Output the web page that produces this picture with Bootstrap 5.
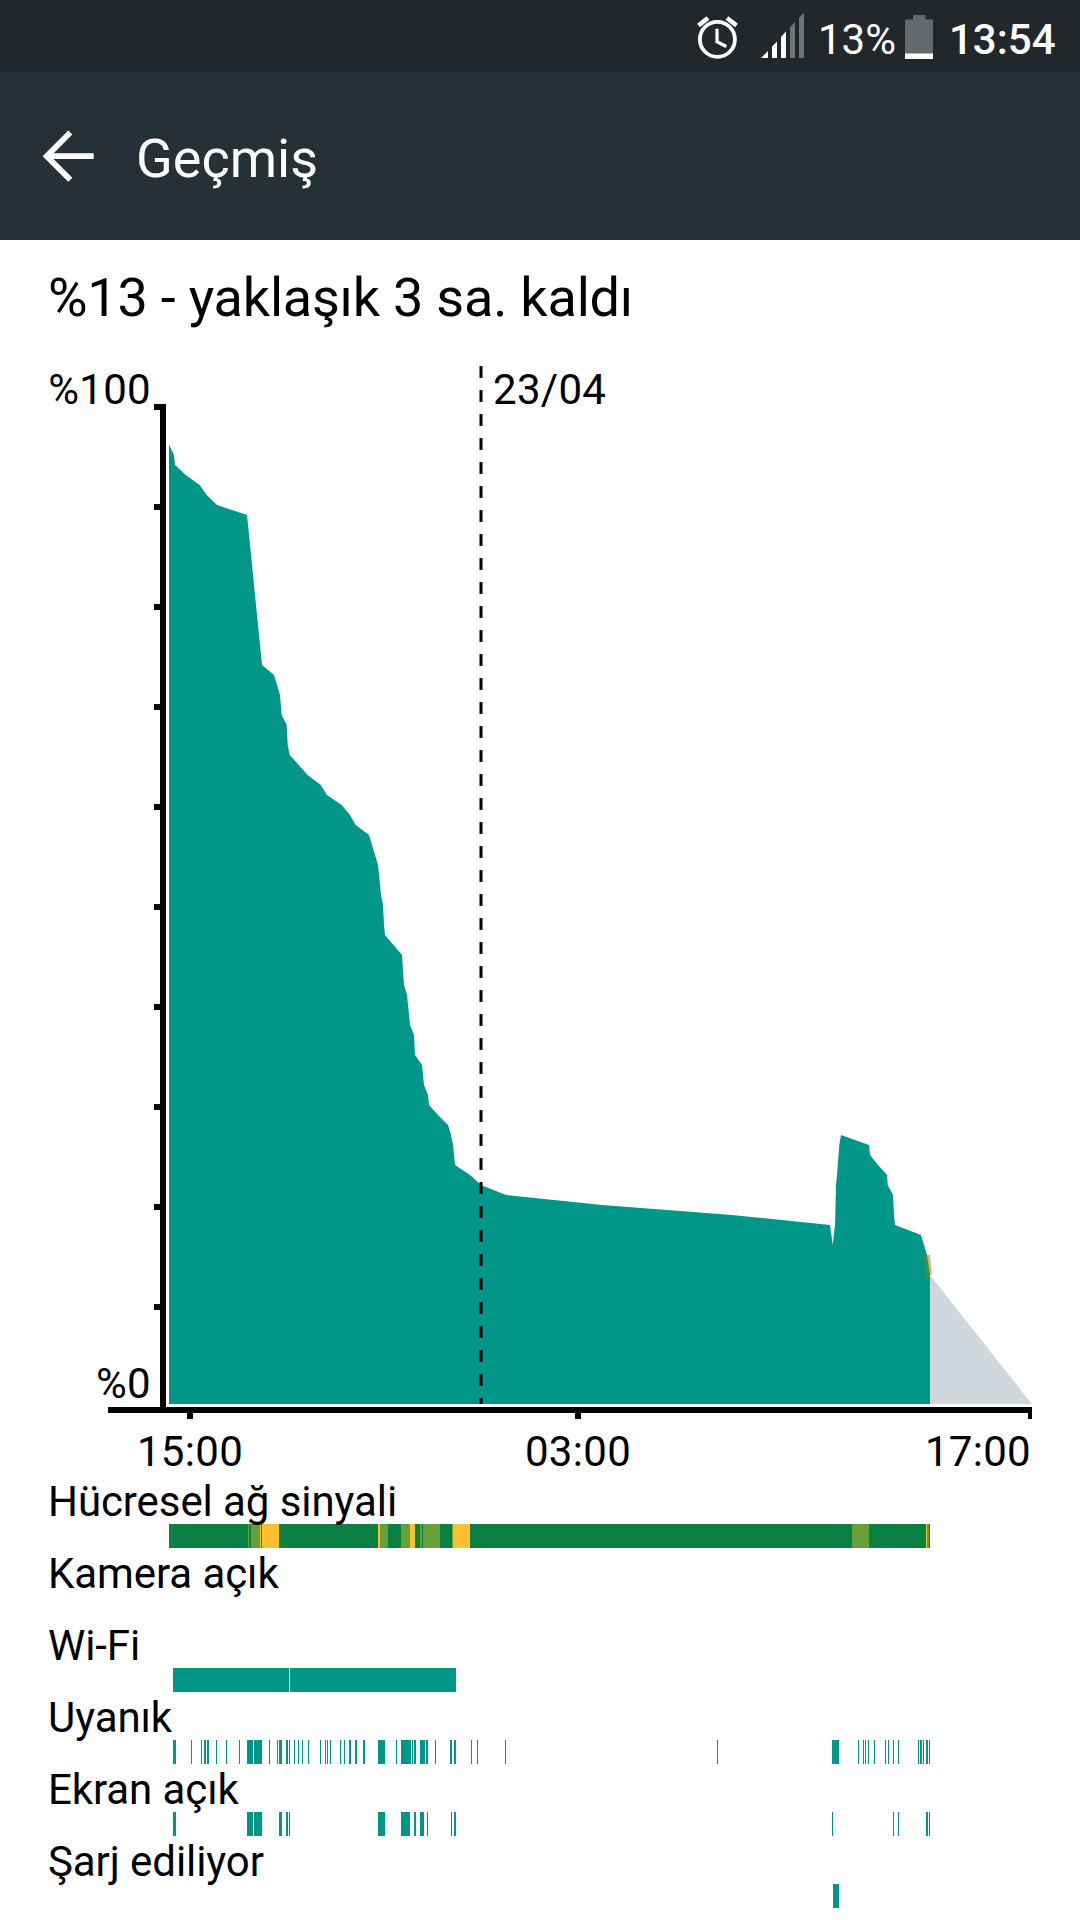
<!DOCTYPE html>
<html lang="tr">
<head>
<meta charset="utf-8">
<meta name="viewport" content="width=device-width, initial-scale=1">
<title>Geçmiş</title>
<link href="https://cdn.jsdelivr.net/npm/bootstrap@5.3.0/dist/css/bootstrap.min.css" rel="stylesheet">
<style>
  body { font-family: Roboto, "Noto Sans", sans-serif; color: #000; background: #fff; font-size: 42px; }
  svg { display: block; flex: none; }
  .screen { width: 1080px; height: 1920px; overflow: hidden; }
  .status-bar { height: 72px; background: #22272b; padding-right: 24px; line-height: 72px; }
  .status-bar svg:first-child { margin-right: -2px; }
  .status-bar .level { width: 81px; padding-top: 4px; }
  .status-bar .battery { margin-right: -2px; }
  .status-bar .clock { width: 107px; padding-top: 4px; font-weight: 500; white-space: nowrap; }
  .app-bar { height: 168px; background: #253136; padding-left: 42px; }
  .app-bar h1 { font-size: 54px; font-weight: 400; line-height: 64px; margin: 0 0 0 41px; padding-top: 6px; }
  .summary { height: 108px; padding: 26px 48px 0; font-size: 54px; font-weight: 400; line-height: 64px; letter-spacing: -.22px; margin: 0; }
  .chart text { font-size: 42px; letter-spacing: .3px; }
  .track { height: 72px; }
  .track-label { position: relative; z-index: 1; line-height: 51px; margin-bottom: -3px; padding-left: 48px; letter-spacing: -.08px; }
</style>
<script defer src="https://cdn.jsdelivr.net/npm/bootstrap@5.3.0/dist/js/bootstrap.bundle.min.js"></script>
</head>
<body>
<div class="screen d-flex flex-column">
  <div class="status-bar d-flex justify-content-end text-white">
    <svg width="140" height="72" viewBox="680 0 140 72" aria-hidden="true">
      <circle cx="717.4" cy="39.4" r="17.5" fill="none" stroke="#fff" stroke-width="3.8"/>
      <path d="M717 28.7v13l9.3 4.8" fill="none" stroke="#fff" stroke-width="3.2"/>
      <path d="M698.5 25.5l9.5-7.5M736.5 25.5l-9.5-7.5" stroke="#fff" stroke-width="4.6"/>
      <path d="M761 58l7-7v7zM772 58V46.500l5-5V58zM781 58V37l5-5.500V58z" fill="#fff"/>
      <path d="M790 58V27.500l5-5.500V58zM799 58V18l5-5.500V58z" fill="#717477"/>
    </svg>
    <span class="level">13%</span>
    <svg class="battery" width="52" height="72" viewBox="899 0 52 72" aria-hidden="true">
      <path d="M905 19.500h8V15h12.500v4.500h7.500V54h-28z" fill="#66696b"/>
      <path d="M905 53.500h28V59h-28z" fill="#fff"/>
    </svg>
    <span class="clock">13:54</span>
  </div>

  <header class="app-bar d-flex align-items-center text-white">
    <svg width="53" height="52" viewBox="42 130 53 52" aria-label="Geri">
      <path d="M93.700 156.200H47M70.300 132.500L46.700 156.200l23.600 23.600" fill="none" stroke="#fff" stroke-width="5.800"/>
    </svg>
    <h1>Geçmiş</h1>
  </header>

  <main>
    <h2 class="summary">%13 - yaklaşık 3 sa. kaldı</h2>

    <svg class="chart" width="1080" height="1128" viewBox="0 348 1080 1128">
      <path fill="#cfd8dc" d="M930 1275L1031.700 1404H930z"/>
      <path fill="#009688" d="M169 1404V444.500L174 455L175 465L185.700 475L199.700 485L206.700 495L217 505L247 515L262 665L274 675L280 695L281.700 715L286.700 725L287.700 745L289.700 755L307.700 775L320.700 785L327 795L341.500 805L350 815L355.700 825L369 835L378 865L381 895L383 905L384 925L385 935L402 955L404 985L407 995L410 1025L414 1035L415 1055L422 1065L424 1085L428 1095L429 1105L438 1115L448 1125L451 1135L453 1145L455 1165L470 1175L481 1185L506 1195L602 1205L732 1215L830 1225L832.700 1245L835 1225L836 1185L837 1175L838.500 1155L839.300 1145L841 1135L869 1145L870 1155L878 1165L887 1175L887.700 1185L893 1195L894 1215L895 1225L921 1235L927 1255L930 1275V1404z"/>
      <path fill="#918100" fill-opacity=".5" d="M924 1255H930L932 1275H930V1278H926z"/>
      <path d="M481 366V1404" stroke="#000" stroke-width="3" stroke-dasharray="12 12"/>
      <path d="M160 404h6V1407h-6zM108 1407H1032v6H108zM187 1413h6v6h-6zM575 1413h6v6h-6zM1028 1413h4v6h-4z
        M154 404h6v6h-6zM154 504h6v6h-6zM154 604h6v6h-6zM154 704h6v6h-6zM154 804h6v6h-6zM154 904h6v6h-6zM154 1004h6v6h-6zM154 1104h6v6h-6zM154 1204h6v6h-6zM154 1304h6v6h-6z"/>
      <text x="151" y="404" text-anchor="end">%100</text>
      <text x="151" y="1398" text-anchor="end">%0</text>
      <text x="493" y="404">23/04</text>
      <text x="190" y="1466" text-anchor="middle">15:00</text>
      <text x="578" y="1466" text-anchor="middle">03:00</text>
      <text x="1031" y="1466" text-anchor="end">17:00</text>
    </svg>

    <section>
      <div class="track"><div class="track-label">Hücresel ağ sinyali</div><svg width="1080" height="24" data-track="signal"></svg></div>
      <div class="track"><div class="track-label">Kamera açık</div><svg width="1080" height="24" data-track="camera"></svg></div>
      <div class="track"><div class="track-label">Wi-Fi</div><svg width="1080" height="24" data-track="wifi"></svg></div>
      <div class="track"><div class="track-label">Uyanık</div><svg width="1080" height="24" data-track="awake"></svg></div>
      <div class="track"><div class="track-label">Ekran açık</div><svg width="1080" height="24" data-track="screen"></svg></div>
      <div class="track"><div class="track-label">Şarj ediliyor</div><svg width="1080" height="24" data-track="charging"></svg></div>
    </section>
  </main>
</div>
<script>
  // Each span is [start, width = 1, colour = teal], on the same time axis as the chart.
  const G = '#0b8043', L = '#689f38', Y = '#fbc02d';
  const tracks = {
    signal: [[169,761,G],[248,1,L],[251,9,L],[260,1,Y],[262,17,Y],[378,2,Y],[380,8,L],[401,9,L],[410,5,Y],[420,2,L],[423,17,L],[452,1,L],[453,17,Y],[852,17,L],[926,1,Y],[927,2,L]],
    camera: [],
    wifi: [[173,116],[290,166]],
    awake: [[173,3],[191],[201],[204,2],[207,2],[216],[226],[239],[247,6],[254,8],[269],[277],[279,3],[286,2],[289],[294],[298],[302],[308],[320],[325],[327],[330],[340],[344],[349,2],[355,2],[363,2],[378,7],[396],[401,10],[412],[414,2],[420,5],[426,2],[435],[450,2],[454,2],[471],[477],[505],[717],[832,7],[858],[863],[865],[868],[874],[885],[888],[893],[898],[918],[920,2],[923],[926,2],[929]],
    screen: [[173,3],[247,6],[254,8],[279,3],[286,2],[289],[378,7],[401,9],[414,2],[420,4],[427],[451],[454,2],[832],[893],[898],[926,2],[929]],
    charging: [[833,6]]
  };
  for (const svg of document.querySelectorAll('[data-track]')) {
    svg.innerHTML = tracks[svg.dataset.track].map(([x, w = 1, c = '#009688']) =>
      `<rect x="${x}" width="${w}" height="24" fill="${c}"/>`).join('');
  }
</script>
</body>
</html>
